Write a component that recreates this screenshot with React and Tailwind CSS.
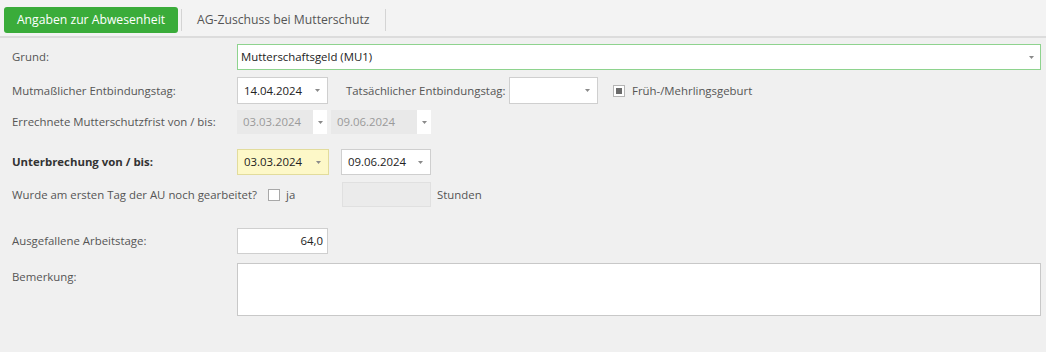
import React from "react";

function Arrow() {
  return (
    <svg width="5" height="3" viewBox="0 0 5 3" className="shrink-0">
      <path d="M0 0h5L2.5 3z" fill="#8a8a8a" />
    </svg>
  );
}

function DateBox({ value, width, bg = "bg-white", border = "border-[#cfcfcf]" }) {
  return (
    <div
      className={`h-full flex items-center justify-between pl-[6px] pr-[7px] border ${border} ${bg} ${width}`}
    >
      <span className="text-[#222]">{value}</span>
      <Arrow />
    </div>
  );
}

function DisabledDate({ value, width }) {
  return (
    <div className={`h-full flex ${width}`}>
      <div className="flex-1 bg-[#e9e9e9] flex items-center pl-[6px] text-[#9a9a9a]">
        {value}
      </div>
      <div className="w-[14px] bg-white flex items-center justify-center">
        <Arrow />
      </div>
    </div>
  );
}

function Row({ label, bold, className, children }) {
  return (
    <div className={`flex items-center ${className}`}>
      <div
        className={`w-[225px] shrink-0 ${bold ? "font-bold text-[#333]" : "text-[#555]"}`}
      >
        {label}
      </div>
      {children}
    </div>
  );
}

export default function App() {
  return (
    <div
      className="w-[1046px] h-[352px] bg-[#f0f0f0] text-[11.4px] overflow-hidden"
      style={{ fontFamily: '"Open Sans", "Noto Sans", sans-serif' }}
    >
      {/* Tabs */}
      <div className="h-[38px] bg-[#f3f3f3] flex items-center pl-[4px] border-b-2 border-[#dcdcdc]">
        <button className="h-[26px] w-[174px] bg-[#3aac3a] text-white rounded-[3px] text-[12.2px] mt-[4px]">
          Angaben zur Abwesenheit
        </button>
        <div className="w-px h-[22px] bg-[#d4d4d4] ml-[3px] mt-[4px]" />
        <div className="w-[203px] pl-[15px] text-[12.2px] text-[#555] mt-[4px]">
          AG-Zuschuss bei Mutterschutz
        </div>
        <div className="w-px h-[22px] bg-[#d4d4d4] mt-[4px]" />
      </div>

      <div className="pl-[12px] pr-[5px] pt-[6px]">
        <Row label="Grund:" className="h-[26px]">
          <div className="flex-1 h-full border border-[#8ed38e] bg-white flex items-center justify-between pl-[3px] pr-[6px] text-[#222]">
            <span>Mutterschaftsgeld (MU1)</span>
            <Arrow />
          </div>
        </Row>

        <Row label="Mutmaßlicher Entbindungstag:" className="h-[27px] mt-[7px]">
          <DateBox value="14.04.2024" width="w-[91px]" />
          <span className="ml-[18px] w-[163px] text-[#555]">Tatsächlicher Entbindungstag:</span>
          <div className="h-full">
            <DateBox value="" width="w-[89px]" />
          </div>
          <div className="ml-[15px] w-[12px] h-[12px] border border-[#b5b5b5] bg-white flex items-center justify-center">
            <div className="w-[6px] h-[6px] bg-[#6b6b6b]" />
          </div>
          <span className="ml-[7px] text-[#555]">Früh-/Mehrlingsgeburt</span>
        </Row>

        <Row label="Errechnete Mutterschutzfrist von / bis:" className="h-[24px] mt-[6px]">
          <DisabledDate value="03.03.2024" width="w-[90px]" />
          <div className="ml-[4px] h-full">
            <DisabledDate value="09.06.2024" width="w-[100px]" />
          </div>
        </Row>

        <Row label="Unterbrechung von / bis:" bold className="h-[26px] mt-[15px]">
          <DateBox
            value="03.03.2024"
            width="w-[92px]"
            bg="bg-[#fdf8c8]"
            border="border-[#e2dc9c]"
          />
          <div className="ml-[12px] h-full">
            <DateBox value="09.06.2024" width="w-[90px]" />
          </div>
        </Row>

        <div className="flex items-center h-[25px] mt-[7px]">
          <span className="w-[256px] text-[#555]">Wurde am ersten Tag der AU noch gearbeitet?</span>
          <div className="w-[12px] h-[12px] border border-[#a8a8a8] bg-white" />
          <span className="ml-[6px] w-[56px] text-[#555]">ja</span>
          <div className="w-[89px] h-full bg-[#ebebeb] border border-[#e0e0e0]" />
          <span className="ml-[6px] text-[#555]">Stunden</span>
        </div>

        <Row label="Ausgefallene Arbeitstage:" className="h-[26px] mt-[21px]">
          <div className="w-[91px] h-full border border-[#cfcfcf] bg-white flex items-center justify-end pr-[4px] text-[#222]">
            64,0
          </div>
        </Row>

        <div className="flex mt-[9px]">
          <div className="w-[225px] shrink-0 text-[#555] pt-[5px]">Bemerkung:</div>
          <div className="flex-1 h-[53px] border border-[#c8c8c8] bg-white" />
        </div>
      </div>
    </div>
  );
}
